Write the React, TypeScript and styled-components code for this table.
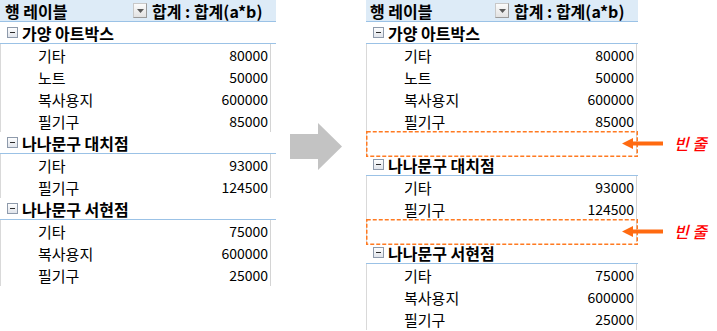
import React from "react";
import styled, { createGlobalStyle } from "styled-components";

const Global = createGlobalStyle`
  html, body { margin: 0; padding: 0; background: #fff; }
  body { font-family: "Noto Sans CJK KR", "Noto Sans", sans-serif; color: #000; }
`;

const Page = styled.div`
  display: flex;
  align-items: flex-start;
  width: 717px;
  height: 331px;
  overflow: hidden;
`;

const Table = styled.div<{ $w: number }>`
  width: ${(p) => p.$w}px;
  display: flex;
  flex-direction: column;
  flex-shrink: 0;
`;

const HeaderRow = styled.div<{ $labelW: number; $pad: number }>`
  box-sizing: border-box;
  height: 22px;
  background: #ddebf7;
  border-bottom: 1px solid #9bc2e6;
  display: grid;
  grid-template-columns: ${(p) => p.$labelW}px 1fr;
  align-items: center;
  font-weight: 700;
  font-size: 16px;
  line-height: 20px;
  padding-left: ${(p) => p.$pad}px;
  white-space: nowrap;
`;

const ValueHead = styled.div`
  display: flex;
  align-items: center;
  gap: 5px;
`;

const DropButton = styled.span`
  box-sizing: border-box;
  width: 14px;
  height: 15px;
  border: 1px solid #c8c8c8;
  border-right-color: #9a9a9a;
  border-bottom-color: #9a9a9a;
  background: linear-gradient(#fbfbfb, #e2e2e2);
  display: flex;
  align-items: center;
  justify-content: center;
`;

const GroupRow = styled.div`
  box-sizing: border-box;
  height: 22px;
  border-bottom: 1px solid #9bc2e6;
  display: flex;
  align-items: center;
  gap: 4px;
  padding-left: 7px;
  font-weight: 700;
  font-size: 16px;
  white-space: nowrap;
`;

const DetailRow = styled.div<{ $inset: number }>`
  box-sizing: border-box;
  height: 22px;
  margin-right: ${(p) => p.$inset}px;
  border-left: 1px solid #d9d9d9;
  border-right: 1px solid #d4d4d4;
  display: flex;
  align-items: center;
  justify-content: space-between;
  padding-left: 37px;
  padding-right: 2px;
  font-size: 15px;
  white-space: nowrap;
`;

const Num = styled.span`
  font-size: 14px;
`;

const BlankRow = styled.div<{ $inset: number }>`
  position: relative;
  box-sizing: border-box;
  height: 22px;
  margin-right: ${(p) => p.$inset}px;
  border-left: 1px solid #d9d9d9;
  border-right: 1px solid #d4d4d4;
`;

const DashBox = styled.svg`
  position: absolute;
  left: -1px;
  top: -1px;
  overflow: visible;
`;

const Note = styled.div`
  position: absolute;
  left: 255px;
  top: 3px;
  display: flex;
  align-items: center;
  white-space: nowrap;
`;

const NoteText = styled.span`
  margin-left: 11px;
  color: #ff0000;
  font-style: italic;
  font-weight: 500;
  font-size: 16px;
  line-height: 16px;
`;

const ArrowArea = styled.div`
  width: 90px;
  flex-shrink: 0;
  padding-top: 123px;
  padding-left: 14px;
  box-sizing: border-box;
`;

type Group = { name: string; items: [string, string][] };

const groups: Group[] = [
  {
    name: "가양 아트박스",
    items: [
      ["기타", "80000"],
      ["노트", "50000"],
      ["복사용지", "600000"],
      ["필기구", "85000"],
    ],
  },
  {
    name: "나나문구 대치점",
    items: [
      ["기타", "93000"],
      ["필기구", "124500"],
    ],
  },
  {
    name: "나나문구 서현점",
    items: [
      ["기타", "75000"],
      ["복사용지", "600000"],
      ["필기구", "25000"],
    ],
  },
];

const CollapseIcon = () => (
  <svg width="11" height="11" viewBox="0 0 11 11">
    <defs>
      <linearGradient id="cg" x1="0" y1="0" x2="0" y2="1">
        <stop offset="0" stopColor="#ffffff" />
        <stop offset="1" stopColor="#dfe3ea" />
      </linearGradient>
    </defs>
    <rect x="0.5" y="0.5" width="10" height="10" fill="url(#cg)" stroke="#8e9aab" />
    <rect x="3" y="5" width="5" height="1" fill="#2b2b2b" />
  </svg>
);

const DropTri = () => (
  <svg width="7" height="4" viewBox="0 0 7 4">
    <polygon points="0,0 7,0 3.5,4" fill="#5a5a5a" />
  </svg>
);

const NoteArrow = () => (
  <svg width="41" height="11" viewBox="0 0 41 11">
    <polygon points="0,5.5 11,0 11,3.5 41,3.5 41,7.5 11,7.5 11,11" fill="#ff6a10" />
  </svg>
);

const Blank: React.FC<{ inset: number; width: number }> = ({ inset, width }) => (
  <BlankRow $inset={inset}>
    <DashBox width={width} height={26}>
      <rect
        x="0.75"
        y="0.75"
        width={width - 1.5}
        height={24.5}
        fill="none"
        stroke="#ff7a21"
        strokeWidth="1.5"
        strokeDasharray="4 2"
      />
    </DashBox>
    <Note>
      <NoteArrow />
      <NoteText>빈 줄</NoteText>
    </Note>
  </BlankRow>
);

const Pivot: React.FC<{ width: number; labelW: number; pad: number; inset: number; blanks?: boolean }> = ({
  width,
  labelW,
  pad,
  inset,
  blanks,
}) => (
  <Table $w={width}>
    <HeaderRow $labelW={labelW} $pad={pad}>
      <span>행 레이블</span>
      <ValueHead>
        <DropButton>
          <DropTri />
        </DropButton>
        <span>합계 : 합계(a*b)</span>
      </ValueHead>
    </HeaderRow>
    {groups.map((g, gi) => (
      <React.Fragment key={g.name}>
        {blanks && gi > 0 && <Blank inset={inset} width={width - inset + 1} />}
        <GroupRow>
          <CollapseIcon />
          <span>{g.name}</span>
        </GroupRow>
        {g.items.map(([label, value]) => (
          <DetailRow key={label} $inset={inset}>
            <span>{label}</span>
            <Num>{value}</Num>
          </DetailRow>
        ))}
      </React.Fragment>
    ))}
  </Table>
);

export default function App() {
  return (
    <>
      <Global />
      <Page>
        <Pivot width={276} labelW={128} pad={5} inset={5} />
        <ArrowArea>
          <svg width="52" height="47" viewBox="0 0 52 47">
            <polygon points="0,11 28,11 28,0 52,23.5 28,47 28,36 0,36" fill="#c3c3c3" />
          </svg>
        </ArrowArea>
        <Pivot width={272} labelW={125} pad={4} inset={1} blanks />
      </Page>
    </>
  );
}
